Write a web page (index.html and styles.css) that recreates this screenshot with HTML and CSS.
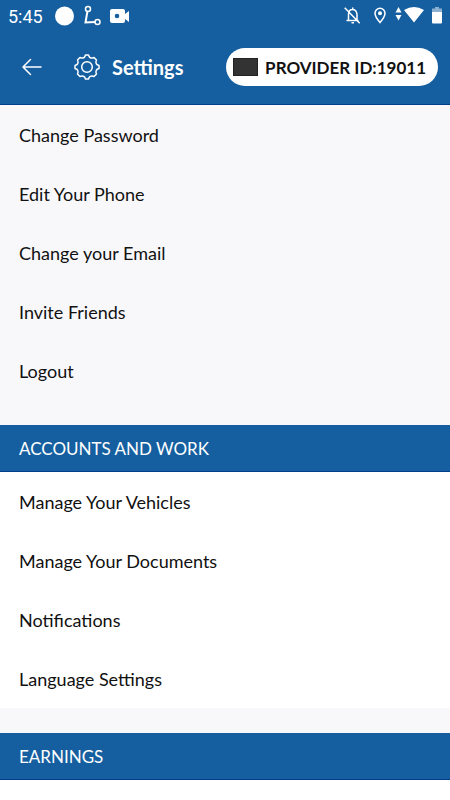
FILE: index.html
```html
<!DOCTYPE html>
<html lang="en">
<head>
<meta charset="utf-8">
<meta name="viewport" content="width=device-width, initial-scale=1">
<title>Settings</title>
<link rel="stylesheet" href="styles.css">
</head>
<body>
<header class="header">
  <div class="status">
    <span class="clock">5:45</span>
    <svg class="status-left" width="90" height="24" viewBox="50 4 90 24" fill="none" stroke="#fff">
      <circle cx="64.5" cy="16" r="9.5" fill="#fff" stroke="none"/>
      <path d="M87.500 11 85.500 22.500 95 22" stroke-width="2"/>
      <circle cx="88" cy="9" r="2.500" stroke-width="1.500"/>
      <circle cx="97.500" cy="22" r="2.500" stroke-width="1.500"/>
      <path fill="#fff" stroke="none" fill-rule="evenodd" d="M112 9h11q2 0 2 2v3l4-3v11l-4-3v2q0 2-2 2h-11q-2 0-2-2V11q0-2 2-2Zm5 4.700a2.300 2.300 0 1 0 0 4.600 2.300 2.300 0 0 0 0-4.600Z"/>
    </svg>
    <svg class="status-right" width="110" height="24" viewBox="340 4 110 24" fill="none" stroke="#fff" stroke-width="1.500">
      <path d="M348.500 20v-5.500q0-5 4-5t4.500 5V20M346.500 20.500h12M352.700 9.500V7.500M351.500 22.800h2.500M344.700 7.700l15 15.500"/>
      <path d="M380 22.500c-3.500-4-5-6.500-5-9.300a5 5 0 0 1 10 0c0 2.800-1.500 5.300-5 9.300Z"/>
      <circle cx="380" cy="13.300" r="2" fill="#fff" stroke="none"/>
      <path fill="#fff" stroke="none" d="M398.500 7l3 5.500h-6zM398.500 20.500l3-5.500h-6zM404 10q10-6 20 0l-10 12.500z"/>
      <path fill="#8aafd0" stroke="none" d="M435 7h4v1.500h3V12h-10V8.500h3z"/>
      <path fill="#fff" stroke="none" d="M432 12h10v10.500q0 1-1 1h-8q-1 0-1-1z"/>
    </svg>
  </div>
  <div class="toolbar">
    <button class="back" type="button" aria-label="Back">
      <svg width="20" height="18" viewBox="0 0 20 18" fill="none" stroke="#fff" stroke-width="1.500" stroke-linecap="round" stroke-linejoin="round"><path d="M19 9H1M8.500 1.500 1 9l7.500 7.500"/></svg>
    </button>
    <svg class="gear" width="26" height="26" viewBox="-13 -13 26 26" fill="none" stroke="#fff" stroke-width="1.500" stroke-linejoin="round">
      <circle r="5.300"/>
      <path d="M-1.500-12H1.500Q2.200-9.500 3.500-9.200 5-8.500 7-9.500L9.500-7Q8.500-5 9.200-3.500 9.500-2.200 12-1.500V1.500Q9.500 2.200 9.200 3.500 8.500 5 9.500 7L7 9.500Q5 8.500 3.500 9.200 2.200 9.500 1.500 12H-1.500Q-2.200 9.500-3.500 9.200-5 8.500-7 9.500L-9.500 7Q-8.500 5-9.200 3.500-9.500 2.200-12 1.500V-1.500Q-9.500-2.200-9.200-3.500-8.500-5-9.500-7L-7-9.500Q-5-8.500-3.500-9.200-2.200-9.500-1.500-12Z"/>
    </svg>
    <h1 class="title">Settings</h1>
    <div class="provider"><span class="swatch"></span>PROVIDER ID:19011</div>
  </div>
</header>
<main>
  <ul class="list">
    <li><a class="row" href="#">Change Password</a></li>
    <li><a class="row" href="#">Edit Your Phone</a></li>
    <li><a class="row" href="#">Change your Email</a></li>
    <li><a class="row" href="#">Invite Friends</a></li>
    <li><a class="row" href="#">Logout</a></li>
  </ul>
  <h2 class="section">ACCOUNTS AND WORK</h2>
  <ul class="list list-white">
    <li><a class="row" href="#">Manage Your Vehicles</a></li>
    <li><a class="row" href="#">Manage Your Documents</a></li>
    <li><a class="row" href="#">Notifications</a></li>
    <li><a class="row" href="#">Language Settings</a></li>
  </ul>
  <h2 class="section">EARNINGS</h2>
  <div class="panel"></div>
</main>
</body>
</html>
```
FILE: styles.css
```css
* { box-sizing: border-box; }
html, body { margin: 0; min-height: 100%; }
body {
  display: flex;
  flex-direction: column;
  min-height: 100vh;
  background: #f8f8fb;
  color: #111;
  font-family: Lato, "Liberation Sans", sans-serif;
  font-size: 18px;
}
.header {
  padding-bottom: 2px;
  background: #155fa0;
  border-bottom: 1px solid #003f8c;
  color: #fff;
}
.status {
  display: flex;
  align-items: center;
  height: 32px;
  padding-left: 8px;
}
.clock {
  width: 42px;
  font-family: Roboto, sans-serif;
  font-size: 18px;
  font-weight: 400;
}
.status-right { margin-left: auto; }
.toolbar {
  display: flex;
  align-items: center;
  height: 70px;
  padding: 0 12px 0 20px;
}
.back {
  display: flex;
  padding: 0;
  margin: 0 32px 0 2px;
  border: 0;
  background: none;
}
.title {
  margin: 0 0 0 12px;
  font-size: 20px;
  font-weight: 700;
}
.provider {
  display: flex;
  align-items: center;
  height: 38px;
  margin-left: auto;
  padding: 0 12px 0 7px;
  border-radius: 19px;
  background: #fff;
  color: #111;
  font-size: 17px;
  font-weight: 700;
  white-space: nowrap;
}
.swatch {
  width: 25px;
  height: 18px;
  margin-right: 7px;
  border: 1px solid #222;
  background: #333;
}
main {
  display: flex;
  flex: 1;
  flex-direction: column;
}
.list {
  margin: 0 0 25px;
  padding: 0;
  list-style: none;
}
.list-white, .panel { background: #fff; }
.panel { flex: 1; }
.row {
  display: flex;
  align-items: center;
  height: 59px;
  padding: 0 19px;
  color: #111;
  text-decoration: none;
}
.section {
  display: flex;
  align-items: center;
  height: 47px;
  margin: 0;
  padding: 0 19px;
  border-bottom: 1px solid #003f8c;
  background: #155fa0;
  color: #fff;
  font-size: 17px;
  font-weight: 400;
}
```
